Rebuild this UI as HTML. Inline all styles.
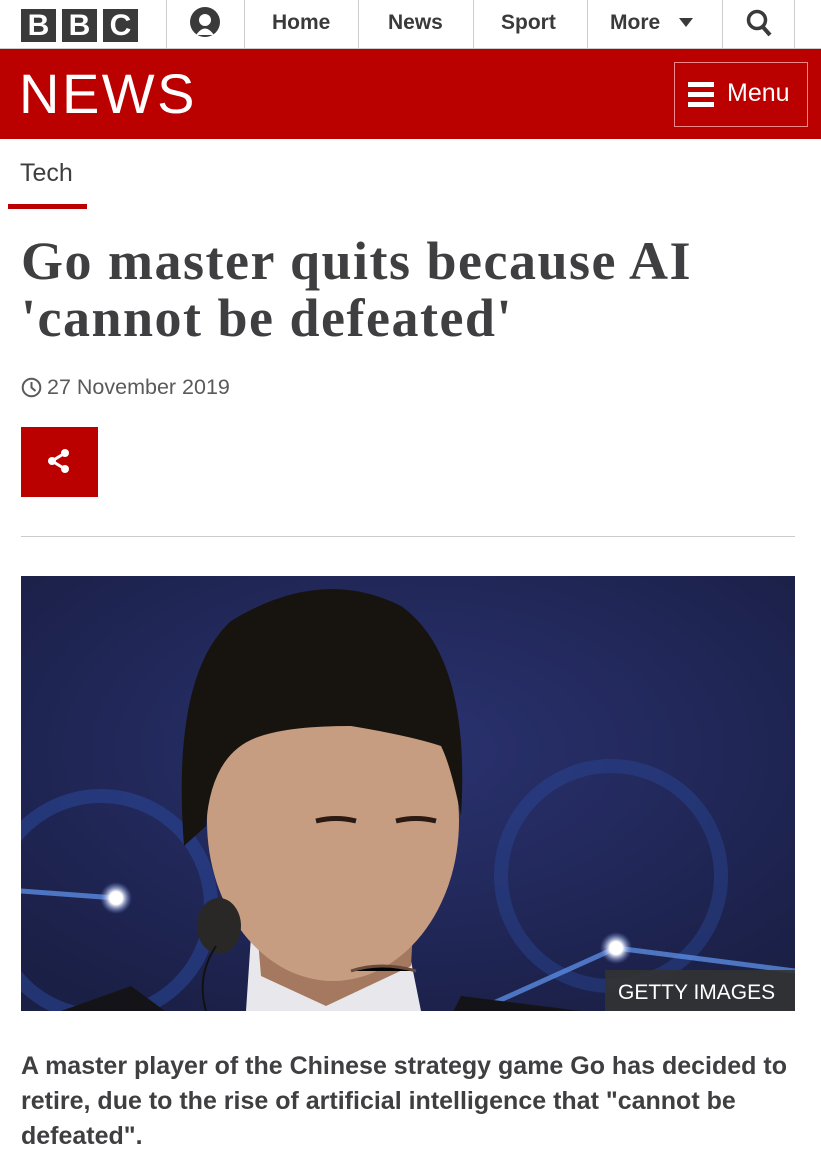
<!DOCTYPE html>
<html><head><meta charset="utf-8"><style>
*{margin:0;padding:0;box-sizing:border-box}
body{width:821px;height:1168px;background:#fff;font-family:"Liberation Sans",sans-serif;position:relative;overflow:hidden;color:#3f3f42}
.abs{position:absolute}
.top{left:0;top:0;width:821px;height:49px;border-bottom:1px solid #ccc;background:#fff}
.blk{top:9px;width:35px;height:33px;background:#3a3a3a;color:#fff;font-weight:bold;font-size:30px;line-height:34px;text-align:center}
.sep{top:0;width:1px;height:48px;background:#ccc}
.nav{top:11px;font-weight:bold;font-size:21px;color:#3a3a3a}
.red{left:0;top:49px;width:821px;height:90px;background:#bb0000}
</style></head><body>
<div class="abs top"></div>
<div class="abs blk" style="left:21px">B</div>
<div class="abs blk" style="left:62px">B</div>
<div class="abs blk" style="left:103px">C</div>
<div class="abs sep" style="left:166px"></div>
<div class="abs sep" style="left:244px"></div>
<div class="abs sep" style="left:358px"></div>
<div class="abs sep" style="left:473px"></div>
<div class="abs sep" style="left:587px"></div>
<div class="abs sep" style="left:722px"></div>
<div class="abs sep" style="left:794px"></div>
<svg class="abs" style="left:188px;top:6px" width="34" height="34" viewBox="0 0 34 34"><circle cx="17" cy="16" r="15" fill="#3a3a3a"/><circle cx="17" cy="14" r="6" fill="#fff"/><path d="M8 29 Q17 16 26 29Z" fill="#fff"/></svg>
<div class="abs nav" style="left:272px">Home</div>
<div class="abs nav" style="left:388px">News</div>
<div class="abs nav" style="left:501px">Sport</div>
<div class="abs nav" style="left:610px">More</div>
<svg class="abs" style="left:679px;top:18px" width="14" height="10"><path d="M0 0H14L7 9Z" fill="#3a3a3a"/></svg>
<svg class="abs" style="left:745px;top:8px" width="28" height="30"><circle cx="12" cy="12" r="8.5" fill="none" stroke="#3a3a3a" stroke-width="3.5"/><path d="M17 18L25 27" stroke="#3a3a3a" stroke-width="4"/></svg>
<div class="abs red"></div>
<div class="abs" style="left:19px;top:64px;color:#fff;font-size:56px;line-height:60px;letter-spacing:2.5px">NEWS</div>
<div class="abs" style="left:674px;top:62px;width:134px;height:65px;border:1px solid #e88;"></div>
<div class="abs" style="left:688px;top:82px;width:26px;height:5px;background:#fff"></div>
<div class="abs" style="left:688px;top:92px;width:26px;height:5px;background:#fff"></div>
<div class="abs" style="left:688px;top:102px;width:26px;height:5px;background:#fff"></div>
<div class="abs" style="left:727px;top:79px;color:#fff;font-size:25px">Menu</div>
<div class="abs" style="left:20px;top:159px;font-size:25px;color:#3f3f42">Tech</div>
<div class="abs" style="left:8px;top:204px;width:79px;height:5px;background:#bb0000"></div>
<div class="abs" style="left:21px;top:233px;width:720px;font-family:'Liberation Serif',serif;font-weight:bold;font-size:54px;letter-spacing:1.5px;line-height:57px;color:#3f3f42">Go master quits because AI 'cannot be defeated'</div>
<svg class="abs" style="left:21px;top:377px" width="21" height="21"><circle cx="10.5" cy="10.5" r="8.8" fill="none" stroke="#5a5a5a" stroke-width="2"/><path d="M10.5 5V10.5L14.5 14" fill="none" stroke="#5a5a5a" stroke-width="2"/></svg>
<div class="abs" style="left:47px;top:375px;font-size:21.5px;color:#5a5a5a">27 November 2019</div>
<div class="abs" style="left:21px;top:427px;width:77px;height:70px;background:#bb0000"></div>
<svg class="abs" style="left:45px;top:448px" width="28" height="28"><path d="M20 5L7 13L20 21" stroke="#fff" stroke-width="3" fill="none"/><circle cx="20" cy="5" r="4" fill="#fff"/><circle cx="7" cy="13" r="4" fill="#fff"/><circle cx="20" cy="21" r="4" fill="#fff"/></svg>
<div class="abs" style="left:21px;top:536px;width:774px;height:1px;background:#ccc"></div>
<svg class="abs" style="left:21px;top:576px" width="774" height="435" viewBox="0 0 774 435">
<defs><radialGradient id="g" cx="50%" cy="40%" r="70%"><stop offset="0" stop-color="#2a3270"/><stop offset="1" stop-color="#1a1f45"/></radialGradient>
<radialGradient id="d"><stop offset="0" stop-color="#fff"/><stop offset=".4" stop-color="#fff"/><stop offset="1" stop-color="#6a8ae0" stop-opacity="0"/></radialGradient></defs>
<rect width="774" height="435" fill="url(#g)"/>
<circle cx="80" cy="330" r="110" fill="none" stroke="#2a4aa0" stroke-width="14" opacity=".5"/>
<circle cx="590" cy="300" r="110" fill="none" stroke="#2a4aa0" stroke-width="14" opacity=".4"/>
<path d="M0 315L95 322M595 372L774 395M595 372L455 435M415 440L490 520" stroke="#5a8ae0" stroke-width="5" opacity=".8"/>
<circle cx="95" cy="322" r="16" fill="url(#d)"/>
<circle cx="595" cy="372" r="16" fill="url(#d)"/>
<path d="M40 435L110 410L232 500L400 500L440 420L560 435Z" fill="#141418"/>
<path d="M225 435L230 360L300 420L385 360L400 435Z" fill="#e8e8ec"/>
<path d="M235 340L240 400L305 430L390 390L395 300Z" fill="#a57860"/>
<ellipse cx="312" cy="245" rx="126" ry="160" fill="#c79d82"/>
<path d="M163 270Q150 100 210 45Q300 -10 380 30Q450 80 440 240Q430 190 420 170Q390 160 330 150Q270 150 240 160Q190 175 185 250Z" fill="#17130f"/>
<ellipse cx="198" cy="350" rx="22" ry="28" fill="#2a2826"/>
<path d="M195 370Q175 400 185 435" stroke="#111" stroke-width="2" fill="none"/>
<path d="M295 245Q315 240 335 245M375 245Q395 240 415 245" stroke="#2a1a12" stroke-width="5"/>
<path d="M330 395Q360 385 395 395" stroke="#6a4a3a" stroke-width="3"/>
<rect x="584" y="394" width="190" height="41" fill="#333" opacity=".9"/>
<text x="597" y="423" fill="#fff" font-family="Liberation Sans" font-size="21">GETTY IMAGES</text>
</svg>
<div class="abs" style="left:21px;top:1049px;width:795px;font-weight:bold;font-size:25px;line-height:35px;color:#3f3f42">A master player of the Chinese strategy game Go has decided to retire, due to the rise of artificial intelligence that "cannot be defeated".</div>
</body></html>
